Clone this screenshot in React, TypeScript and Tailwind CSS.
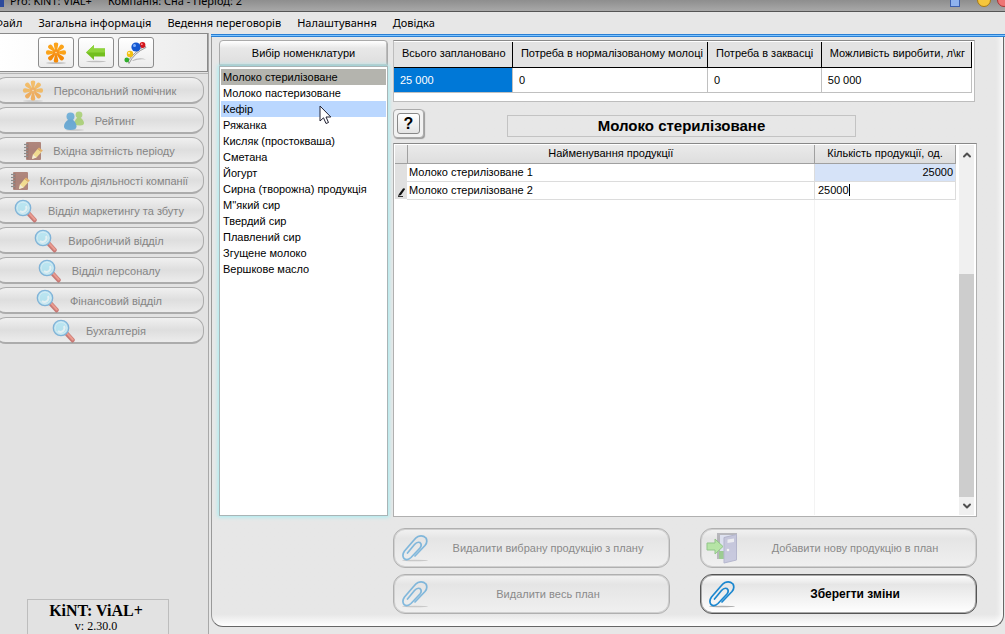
import type { ReactNode } from "react";
import { ChevronDown, ChevronUp } from "lucide-react";

const menu = ["Файл", "Загальна інформація", "Ведення переговорів", "Налаштування", "Довідка"];

const products = [
  "Молоко стерилізоване",
  "Молоко пастеризоване",
  "Кефір",
  "Ряжанка",
  "Кисляк (простокваша)",
  "Сметана",
  "Йогурт",
  "Сирна (творожна) продукція",
  "М''який сир",
  "Твердий сир",
  "Плавлений сир",
  "Згущене молоко",
  "Вершкове масло",
];

const summary = [
  { title: "Всього заплановано", value: "25 000" },
  { title: "Потреба в нормалізованому молоці", value: "0" },
  { title: "Потреба в заквасці", value: "0" },
  { title: "Можливість виробити, л\\кг", value: "50 000" },
];

function Flower({ className }: { className: string }) {
  return (
    <svg viewBox="0 0 22 22" className={className}>
      <ellipse cx="11" cy="21" rx="10" ry="0.8" fill="#000" opacity="0.25" />
      {[0, 45, 90, 135, 180, 225, 270, 315].map((a) => (
        <path
          key={a}
          d="M10 8.500 L8.800 2.800 Q8.500 .4 11 .4 Q13.500 .4 13.200 2.800 L12 8.500Z"
          fill={a > 90 && a < 270 ? "#f58a07" : "#fba31a"}
          transform={`rotate(${a} 11 10.500)`}
        />
      ))}
      <circle cx="11" cy="10.500" r="3" fill="#f7941d" />
      <circle cx="11" cy="10.500" r="0.8" fill="#fde3b0" />
    </svg>
  );
}

function People() {
  return (
    <svg viewBox="0 0 22 20" className="h-5 w-5.5 opacity-60">
      <ellipse cx="12" cy="19" rx="9" ry="0.8" fill="#000" opacity="0.25" />
      <circle cx="16" cy="3.800" r="3.400" fill="#8cc63f" />
      <path d="M11 14 Q11 9.500 14.500 6.500 H17.500 Q21 9.500 21 12 Q21 14.500 17 14.500Z" fill="#8cc63f" />
      <circle cx="7.500" cy="5.500" r="4" fill="#2b8fd0" />
      <path d="M1 15.500 Q1 11.500 5.500 8.500 H9.500 Q13.500 11.500 13.500 15.500 Q13.500 19 7.500 19 Q1 19 1 15.500Z" fill="#1f84c8" />
    </svg>
  );
}

function Notebook() {
  return (
    <svg viewBox="0 0 20 20" className="size-5 opacity-60">
      <rect x="3" y="1" width="15" height="18" rx="1" fill="#8a4636" />
      <rect x="4" y="2" width="1.500" height="16" fill="#6d3225" />
      {[3, 6, 9, 12, 15].map((y) => (
        <path key={y} d={`M1 ${y}.500h4`} stroke="#555" strokeWidth="1.200" />
      ))}
      <path d="M9 18 L10 13.500 L14.500 8 L18.500 11 L13.500 16.500Z" fill="#fbd95c" />
      <path d="M14.500 8 L16 6.500 L19.800 9.500 L18.500 11Z" fill="#e8941e" />
      <path d="M9 18 L10 13.500 L13.500 16.500Z" fill="#fdf0cc" />
    </svg>
  );
}

function Magnifier() {
  return (
    <svg viewBox="0 0 24 24" className="size-6 opacity-60">
      <path d="M15 15 L20.500 21" stroke="#b3302a" strokeWidth="4.500" strokeLinecap="round" />
      <path d="M15.500 14.800 L20.800 20.500" stroke="#ee6a55" strokeWidth="2" strokeLinecap="round" />
      <circle cx="9" cy="9" r="7.700" fill="#a5e4f7" stroke="#3f93d0" strokeWidth="1.300" />
      <circle cx="9" cy="9" r="5.800" fill="#9ce4f8" stroke="#c4eefc" strokeWidth="1" />
      <path d="M6 12 A4 4 0 0 0 12 7" fill="none" stroke="#e8faff" strokeWidth="2" />
    </svg>
  );
}

function Clip() {
  return (
    <svg viewBox="0 0 28 28" className="size-7">
      <ellipse cx="14" cy="26.500" rx="13" ry="0.800" fill="#000" opacity="0.3" />
      <path
        d="M14 22 L24 11.500 Q27 8 25 4 Q21.500 .6 17 2.500 Q15 3.500 13 6 L3.500 17 Q.6 21 3 24.500 Q6.500 27 10 23.500 L19 14 Q21.500 10.500 18.800 8.500 Q16 7.500 13.500 10.500 L6.500 19"
        fill="none"
        stroke="#1b87cf"
        strokeWidth="1.700"
        strokeLinecap="round"
        strokeLinejoin="round"
      />
    </svg>
  );
}

function Door() {
  return (
    <svg viewBox="0 0 32 32" className="size-8">
      <path d="M11 1h20v26H11z" fill="#85858f" />
      <path d="M14 3h15v22H14z" fill="#d4dcf8" />
      <path d="M13 19h6v8h-6z" fill="#4fae3a" />
      <path d="M18 5.500 L30.500 2.500 V28 L18 31Z" fill="#a6a8d2" stroke="#8083b0" strokeWidth="1" />
      <path d="M21.500 7.500 L28 6.500 V10 L21.500 11Z" fill="#f2f3fc" />
      <circle cx="22" cy="18" r="1.300" fill="#fff" />
      <path d="M1 11h8V7l8 7.500L9 22v-4H1z" fill="#86e266" stroke="#3ea52c" strokeWidth="1" />
    </svg>
  );
}

function GreenArrow() {
  return (
    <svg viewBox="0 0 22 20" className="h-5 w-5.5">
      <ellipse cx="11" cy="18.500" rx="10" ry="0.800" fill="#000" opacity="0.2" />
      <path d="M1 9.500 L9 2 V5.500 H20 V13.500 H9 V17Z" fill="#73be1e" />
      <path d="M1 9.500 L9 2 V5.500 H20 V9.500Z" fill="#8fd43a" />
    </svg>
  );
}

function Balls() {
  return (
    <svg viewBox="0 0 24 24" className="size-6">
      <path d="M8 19.500 Q15 15.500 22 18.500 Q15 17.500 9 20Z" fill="#bbb" />
      <path d="M5 22.500 Q10 12 22 6.500 L21 5 Q11 10 4 20Z" fill="#e4e4e4" stroke="#777" strokeWidth="0.700" />
      <circle cx="18.500" cy="4" r="2.900" fill="#d3151b" />
      <circle cx="17.800" cy="3.200" r="0.900" fill="#ff9a9a" />
      <circle cx="12" cy="6" r="4.600" fill="#1457d0" />
      <circle cx="10.500" cy="4.500" r="1.500" fill="#7fb0ff" />
      <circle cx="6" cy="13" r="3.200" fill="#f2bf12" />
      <circle cx="5" cy="12" r="1.100" fill="#fff2b0" />
      <circle cx="2.800" cy="19" r="2.400" fill="#2fae2c" />
    </svg>
  );
}

const departments = [
  { icon: <Flower className="size-5.5 opacity-60" />, title: "Персональний помічник" },
  { icon: <People />, title: "Рейтинг" },
  { icon: <Notebook />, title: "Вхідна звітність періоду" },
  { icon: <Notebook />, title: "Контроль діяльності компанії" },
  { icon: <Magnifier />, title: "Відділ маркетингу та збуту" },
  { icon: <Magnifier />, title: "Виробничий відділ" },
  { icon: <Magnifier />, title: "Відділ персоналу" },
  { icon: <Magnifier />, title: "Фінансовий відділ" },
  { icon: <Magnifier />, title: "Бухгалтерія" },
];

function ToolButton({ label, children }: { label: string; children: ReactNode }) {
  return (
    <button aria-label={label} className="flex h-[31px] w-9 items-center justify-center rounded-[3px] border border-[#8c8c8c] bg-linear-to-b from-white to-[#ececec]">
      {children}
    </button>
  );
}

function ActionButton({ icon, title, active = false }: { icon: ReactNode; title: string; active?: boolean }) {
  return (
    <button
      disabled={!active}
      className={
        "flex h-10 items-center rounded-xl border bg-linear-to-b pl-[5px] " +
        (active
          ? "border-[#555] from-white via-[#e6e6e6] via-25% to-white text-xs font-bold text-black shadow-[inset_0_0_0_1px_#aaa]"
          : "border-[#b0b0b0] from-[#f2f2f2] via-[#e5e5e5] via-25% to-[#f0f0f0] text-[#8a8a8a] shadow-[inset_0_0_0_1px_#d0d0d0]")
      }
    >
      <span className={active ? "flex w-8 justify-center" : "flex w-8 justify-center opacity-50"}>{icon}</span>
      <span className="flex-1 pr-5 pl-4">{title}</span>
    </button>
  );
}

function TitleBar() {
  return (
    <header className="flex h-3 shrink-0 items-end overflow-hidden border-b border-[#555] bg-linear-to-b from-[#8e8e8e] to-[#a8a8a8] font-['Noto_Sans',sans-serif] text-[11px] leading-4 whitespace-pre text-black">
      <span className="mb-1 h-2 w-1 bg-[#2c4a9c]" />
      <span className="pb-0.5 pl-1.5">Pro: KiNT: ViAL+</span>
      <span className="pb-0.5 pl-4">Компанія: Сна - Період: 2</span>
      <span className="mr-[17px] mb-1 ml-auto h-2 w-2.5 border border-[#3c5fae] bg-[#8fb2ee]" />
      <span className="mr-1.5 mb-1 size-3.5 rounded-full border border-[#a97a12] bg-[#f5c63c]" />
      <span className="-mr-1.5 mb-1 size-3.5 rounded-full border border-[#a93434] bg-[#ee7575]" />
    </header>
  );
}

function Sidebar() {
  return (
    <aside className="flex w-[209px] shrink-0 flex-col border-r border-[#a8a8a8] bg-[#e2e2e2]">
      <div className="flex h-[39px] shrink-0 items-center justify-center gap-1 border border-l-0 border-[#8a8a8a] bg-linear-to-r from-white to-[#ececec] pr-4">
        <ToolButton label="Персональний помічник">
          <Flower className="size-5.5" />
        </ToolButton>
        <ToolButton label="Назад">
          <GreenArrow />
        </ToolButton>
        <ToolButton label="Показники">
          <Balls />
        </ToolButton>
      </div>
      <nav className="mt-px -ml-1.5 flex flex-col gap-[3px] border-t border-[#b4b4b4] pt-[3px] pr-1">
        {departments.map((d) => (
          <button
            key={d.title}
            disabled
            className="flex h-[27px] items-center justify-center gap-2.5 rounded-xl border border-b-2 border-[#acacac] bg-linear-to-b from-[#f0f0f0] via-[#dedede] to-[#ececec] pt-px whitespace-nowrap text-[#858585]"
          >
            {d.icon}
            {d.title}
          </button>
        ))}
      </nav>
      <div className="mt-auto ml-[27px] h-[35px] w-[142px] border border-b-0 border-[#bdbdbd] pr-1 text-center font-['Liberation_Serif',serif] leading-4 text-black">
        <div className="pt-[3px] text-base leading-4 font-bold">KiNT: ViAL+</div>
        <div className="text-xs leading-[15px]">v: 2.30.0</div>
      </div>
    </aside>
  );
}

function ProductList() {
  return (
    <section className="flex w-[169px] shrink-0 flex-col">
      <button className="h-[26px] rounded-t-sm border border-[#aaa] bg-linear-to-b from-white via-[#e8e8e8] via-30% to-[#dedede] shadow-[inset_-1px_-1px_0_#bbb]">
        Вибір номенклатури
      </button>
      <ul className="flex-1 border border-[#a9b4b6] bg-white px-px pt-0.5 leading-4 shadow-[0_0_4px_1px_#a5edf2]">
        {products.map((p, i) => (
          <li
            key={p}
            className={
              i === 0 ? "bg-[#b4b4ae] pl-0.5" : i === 2 ? "relative bg-[#bad7ff] pl-0.5" : "pl-0.5"
            }
          >
            {p}
            {i === 2 && (
              <svg viewBox="0 0 13 20" className="absolute top-1 left-[98px] z-10 h-5 w-[13px]">
                <path d="M1 1 V16 L4.500 12.800 L7 18.500 L9.500 17.500 L7 12 H11.800Z" fill="#fff" stroke="#223" strokeWidth="1" />
              </svg>
            )}
          </li>
        ))}
      </ul>
    </section>
  );
}

function SummaryTable() {
  return (
    <div className="mr-0.5 h-[62px] border border-[#bdbdbd] border-t-[#8a8a8a] bg-white pt-px pr-0.5">
      <table className="w-full table-fixed border-collapse text-left">
        <colgroup>
          <col className="w-[20.500%]" />
          <col className="w-[33.800%]" />
          <col className="w-[19.700%]" />
          <col />
        </colgroup>
        <thead>
          <tr className="h-[25px]">
            {summary.map((c) => (
              <th key={c.title} className="border-r border-b border-black bg-[#e3e3e3] pb-[3px] pl-2 font-normal whitespace-nowrap">
                {c.title}
              </th>
            ))}
          </tr>
        </thead>
        <tbody>
          <tr className="h-[25px]">
            {summary.map((c, i) => (
              <td key={c.title} className={i === 0 ? "border-r border-b border-[#c0c0c0] bg-[#0078d7] pl-1.5 text-white" : "border-r border-b border-[#c0c0c0] pl-1.5"}>
                {c.value}
              </td>
            ))}
          </tr>
        </tbody>
      </table>
    </div>
  );
}

function PlanGrid() {
  return (
    <div className="mt-[5px] flex flex-1 border border-[#b0b0b0] border-t-[#888] bg-white p-px">
      <div className="flex min-w-0 flex-1 flex-col">
        <table className="w-full table-fixed border-collapse">
          <colgroup>
            <col className="w-3" />
            <col />
            <col className="w-[141px]" />
          </colgroup>
          <thead>
            <tr className="h-[18px] bg-linear-to-b from-[#eaeaea] to-[#dedede]">
              <th className="border-r border-b border-[#a0a0a0]" />
              <th className="border-r border-b border-[#a0a0a0] pb-0.5 font-normal">Найменування продукції</th>
              <th className="border-r border-b border-[#a0a0a0] pb-0.5 font-normal whitespace-nowrap">Кількість продукції, од.</th>
            </tr>
          </thead>
          <tbody>
            <tr className="h-[18px]">
              <td className="bg-[#e0e0e0]" />
              <td className="border-r border-b border-[#dcdcdc] pl-0.5">Молоко стерилізоване 1</td>
              <td className="border-r border-b border-[#dcdcdc] bg-[#d6e3f8] pr-0.5 text-right">25000</td>
            </tr>
            <tr className="h-[18px]">
              <td className="bg-[#e0e0e0]">
                <svg viewBox="0 0 12 12" className="mt-1 h-3 w-3">
                  <path d="M4 8 L8 2.500 Q10 1.500 9.800 3.500 L6 9 L3 10Z" fill="#111" />
                  <path d="M3 10.500h5" stroke="#333" />
                </svg>
              </td>
              <td className="border-r border-b border-[#dcdcdc] pl-0.5">Молоко стерилізоване 2</td>
              <td className="border-r border-b border-[#dcdcdc] pl-[3px]">
                <div className="flex items-center">
                  <input aria-label="Кількість продукції" defaultValue="25000" className="h-[15px] w-[31px] bg-transparent p-0 outline-none" />
                  <span className="h-3 w-px bg-black" />
                </div>
              </td>
            </tr>
          </tbody>
        </table>
        <div className="mr-[141px] flex-1 border-r border-[#f3f3f3]" />
      </div>
      <div className="mr-px ml-[3px] flex w-[15px] shrink-0 flex-col items-center bg-[#f0f0f0]">
        <ChevronUp className="mt-1 size-3 text-[#505050]" strokeWidth={4} />
        <div className="mt-auto h-[223px] w-full bg-[#cdcdcd]" />
        <ChevronDown className="my-[3px] size-3 shrink-0 text-[#505050]" strokeWidth={4} />
      </div>
    </div>
  );
}

export default function App() {
  return (
    <div className="flex min-h-screen flex-col overflow-hidden bg-[#e7e7e7] font-['Liberation_Sans',Arial,sans-serif] text-[11px] leading-[14px] text-black">
      <TitleBar />
      <nav className="-ml-1.5 flex h-[21px] shrink-0 items-center gap-4 font-['Noto_Sans',sans-serif] text-[11px] whitespace-nowrap">
        {menu.map((m) => (
          <button key={m}>{m}</button>
        ))}
      </nav>
      <div className="flex flex-1">
        <Sidebar />
        <div className="flex min-w-0 flex-1 flex-col pt-px pb-[7px] pl-0.5">
          <div className="h-[3px] shrink-0 border-y border-[#2a7fd4] bg-[#7cc4ff]" />
          <main className="mr-px flex flex-1 gap-[5px] rounded-b-xl border border-t-0 border-[#666] border-l-[#999] bg-linear-to-b from-[#e7e7e7] from-98% to-white pt-[3px] pr-[26px] pl-[7px] shadow-[inset_-6px_0_6px_-4px_#fff]">
            <div className="mb-[110px] flex">
              <ProductList />
            </div>
            <div className="flex min-w-0 flex-1 flex-col">
              <SummaryTable />
              <div className="mt-[7px] flex h-[29px] items-center">
                <button className="flex h-[29px] w-[31px] items-center justify-center rounded-sm border border-[#aaa] bg-[#f2f2f2] shadow-[1px_1px_1px_#999]">
                  <span className="flex h-[21px] w-[23px] items-center justify-center rounded-[3px] border border-[#888] bg-linear-to-b from-white to-[#e4e4e4] text-base font-bold">?</span>
                </button>
                <h1 className="mt-1 mr-[121px] ml-[83px] flex h-[22px] flex-1 items-center justify-center border border-[#c3c3c3] text-[15px] font-bold whitespace-nowrap">
                  Молоко стерилізоване
                </h1>
              </div>
              <PlanGrid />
              <div className="mt-[11px] mb-3 grid grid-cols-2 gap-x-[30px] gap-y-1.5">
                <ActionButton icon={<Clip />} title="Видалити вибрану продукцію з плану" />
                <ActionButton icon={<Door />} title="Добавити нову продукцію в план" />
                <ActionButton icon={<Clip />} title="Видалити весь план" />
                <ActionButton icon={<Clip />} title="Зберегти зміни" active />
              </div>
            </div>
          </main>
        </div>
      </div>
    </div>
  );
}
